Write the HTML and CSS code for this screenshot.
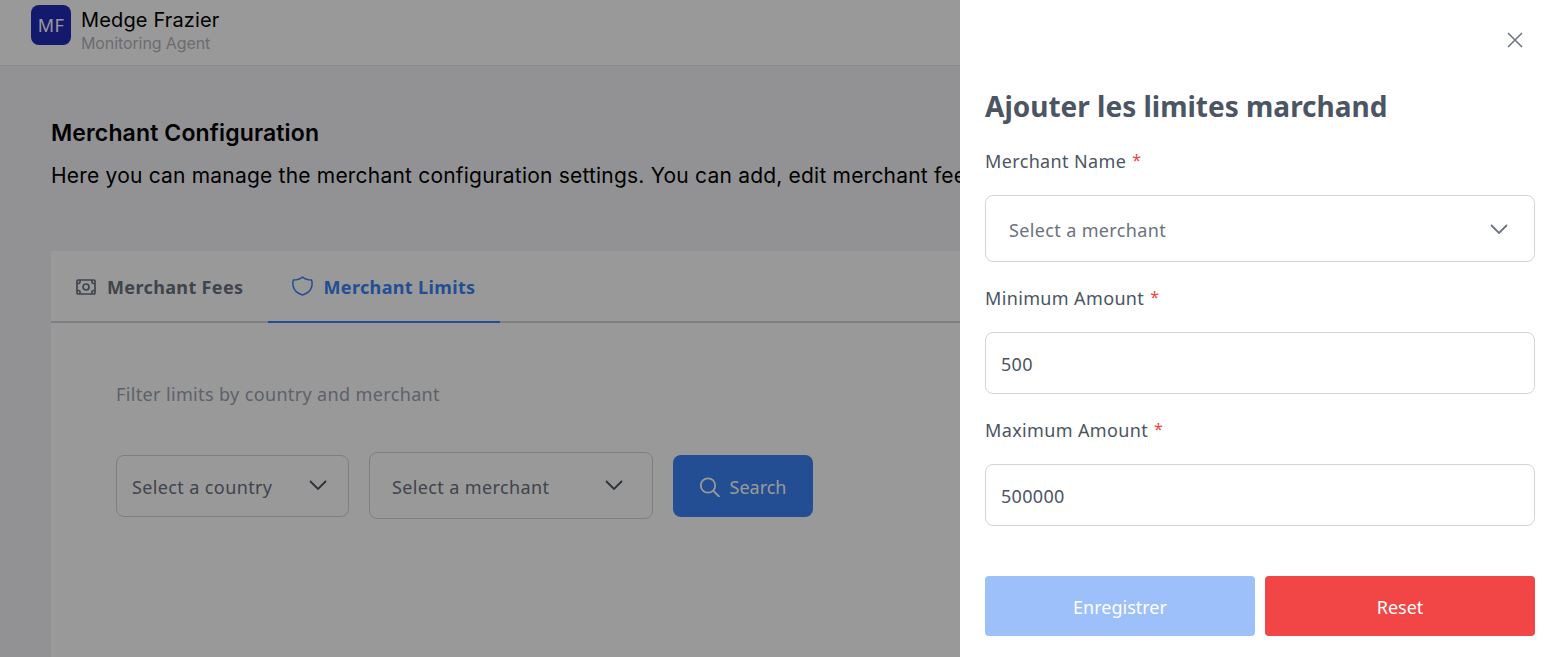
FILE: index.html
```html
<!DOCTYPE html>
<html lang="en">
<head>
<meta charset="utf-8">
<title>Merchant Configuration</title>
<link rel="stylesheet" href="styles.css">
</head>
<body>
<div class="page">
  <header class="topbar">
    <div class="avatar">MF</div>
    <div class="user">
      <div class="user-name">Medge Frazier</div>
      <div class="user-role">Monitoring Agent</div>
    </div>
  </header>
  <main class="main">
    <h1 class="page-title">Merchant Configuration</h1>
    <p class="page-desc">Here you can manage the merchant configuration settings. You can add, edit merchant fees</p>
    <section class="card">
      <nav class="tabs">
        <div class="tab">
          <svg class="icon-fees" viewBox="0 0 20 16" fill="none" stroke="currentColor" stroke-width="1.7"><rect x="1" y="1" width="18" height="14" rx="1"/><circle cx="10" cy="8" r="3"/><path d="M1 4.500h1.500a1.500 1.500 0 0 0 1.500-1.500V1M19 4.500h-1.500A1.500 1.500 0 0 1 16 3V1M1 11.500h1.500A1.500 1.500 0 0 1 4 13v2M19 11.500h-1.500A1.500 1.500 0 0 0 16 13v2"/></svg>
          <span>Merchant Fees</span>
        </div>
        <div class="tab tab-active">
          <svg class="icon-shield" viewBox="0 0 21 20" fill="none" stroke="currentColor" stroke-width="1.500" stroke-linejoin="round"><path d="M10.500 1C13 3.200 16 4 19.600 4c.6 2 .6 4 .3 6C19 14.500 15.500 17.500 10.500 19 5.500 17.500 2 14.500 1.100 10 .8 8 .8 6 1.400 4 5 4 8 3.200 10.500 1z"/></svg>
          <span>Merchant Limits</span>
        </div>
      </nav>
      <div class="card-body">
        <p class="filter-hint">Filter limits by country and merchant</p>
        <div class="filters">
          <div class="filter filter-country">
            <span>Select a country</span>
            <svg class="chevron" viewBox="0 0 20 20" fill="none" stroke="currentColor" stroke-width="1.800"><path d="M2 6l8 8 8-8"/></svg>
          </div>
          <div class="filter filter-merchant">
            <span>Select a merchant</span>
            <svg class="chevron" viewBox="0 0 20 20" fill="none" stroke="currentColor" stroke-width="1.800"><path d="M2 6l8 8 8-8"/></svg>
          </div>
          <button class="search-btn" type="button">
            <svg class="search-icon" viewBox="0 0 20 20" fill="none" stroke="currentColor" stroke-width="1.800" stroke-linecap="round"><circle cx="8" cy="8.500" r="7.200"/><path d="M13.500 14l5.500 5.500"/></svg>
            <span>Search</span>
          </button>
        </div>
      </div>
    </section>
  </main>
</div>
<div class="overlay"></div>
<aside class="drawer">
  <div class="drawer-top">
    <svg class="close-icon" viewBox="0 0 16 16" fill="none" stroke="currentColor" stroke-width="1.500"><path d="M1 1l14 14M15 1L1 15"/></svg>
  </div>
  <h2 class="drawer-title">Ajouter les limites marchand</h2>
  <form class="form">
    <div class="label">Merchant Name <span class="req">*</span></div>
    <div class="select-box">
      <span>Select a merchant</span>
      <svg class="chevron chevron-lg" viewBox="0 0 20 20" fill="none" stroke="currentColor" stroke-width="1.800"><path d="M2 6l8 8 8-8"/></svg>
    </div>
    <div class="label">Minimum Amount <span class="req">*</span></div>
    <div class="input-box">500</div>
    <div class="label">Maximum Amount <span class="req">*</span></div>
    <div class="input-box">500000</div>
    <div class="actions">
      <button class="btn btn-save" type="button">Enregistrer</button>
      <button class="btn btn-reset" type="button">Reset</button>
    </div>
  </form>
</aside>
</body>
</html>
```
FILE: styles.css
```css
* { box-sizing: border-box; }
html, body { margin: 0; height: 100%; overflow: hidden; }
body { font-family: "Noto Sans", sans-serif; background: #f3f4f7; color: #111; }
.page { height: 657px; overflow: hidden; }
.topbar { height: 66px; padding: 5px 31px 0; display: flex; gap: 10px; background: #fff; border-bottom: 1px solid #e7e7ea; align-items: flex-start; }
.avatar { width: 40px; height: 40px; border-radius: 8px; background: #212cb6; color: #fff; display: flex; align-items: center; justify-content: center; font-size: 18px; letter-spacing: .5px; }
.user { padding-top: 1px; font-family: Inter, sans-serif; }
.user-name { font-size: 20px; line-height: 28px; color: #000; letter-spacing: .15px; }
.user-role { font-size: 16px; line-height: 21px; color: #b4b4bc; margin-top: -1px; letter-spacing: -.1px; }
.main { padding: 52px 51px 0; }
.page-title { margin: 0; font: 600 23px/30px Inter, sans-serif; color: #000; letter-spacing: .14px; }
.page-desc { margin: 14px 0 0; font: 400 21px/27px Inter, sans-serif; color: #000; white-space: nowrap; letter-spacing: .2px; }
.card { margin-top: 62px; background: #fff; height: 420px; }
.tabs { display: flex; height: 72px; border-bottom: 2px solid #d1d5db; }
.tab { display: flex; align-items: center; gap: 10px; padding: 0 25px 0 24px; height: 72px; font-size: 18px; font-weight: 700; color: #6b7280; letter-spacing: .36px; }
.icon-fees { width: 20px; height: 16px; margin: 0 1px 0 1px; }
.icon-shield { width: 21px; height: 20px; margin-top: -2px; }
.tab-active { border-bottom: 2px solid #3b82f6; color: #3b82f6; padding-top: 2px; }
.card-body { padding: 58px 65px 0; }
.filter-hint { margin: 0; font-size: 18px; line-height: 26px; color: #9ca3af; letter-spacing: .36px; }
.filters { display: flex; align-items: center; gap: 20px; margin-top: 45px; }
.filter { display: flex; align-items: center; justify-content: space-between; border: 1px solid #d1d5db; border-radius: 8px; font-size: 18px; color: #6b7280; background: #fff; letter-spacing: .38px; padding-top: 2px; }
.filter-country { width: 233px; height: 62px; padding-left: 15px; padding-right: 20px; }
.filter-merchant { width: 284px; height: 67px; padding-left: 22px; padding-right: 28px; }
.chevron { width: 20px; height: 20px; color: #4b5563; margin-top: -3px; }
.search-btn { width: 140px; height: 62px; display: flex; align-items: center; justify-content: center; gap: 10px; background: #3b82f6; border: 0; border-radius: 8px; color: #fff; font: 400 18px "Noto Sans", sans-serif; padding: 2px 0 0; }
.search-icon { width: 20px; height: 20px; }
.overlay { position: fixed; inset: 0; background: rgba(0, 0, 0, .4); }
.drawer { position: fixed; top: 0; right: 0; bottom: 0; width: 598px; background: #fff; padding: 0 23px 0 25px; }
.drawer-top { height: 86px; display: flex; justify-content: flex-end; padding: 32px 0 0; }
.close-icon { width: 16px; height: 16px; color: #6b7280; margin-right: 12px; }
.drawer-title { margin: 0 0 12px; font-size: 28px; line-height: 40px; font-weight: 700; color: #4b5563; }
.form { display: flex; flex-direction: column; }
.label { font-size: 18px; line-height: 26px; color: #4b5563; margin-top: 9px; letter-spacing: .36px; }
.req { color: #ef4444; font-size: 16px; vertical-align: 2px; margin-left: 1px; }
.select-box { height: 67px; margin-top: 21px; display: flex; align-items: center; justify-content: space-between; padding: 2px 25px 0 23px; border: 1px solid #d1d5db; border-radius: 8px; font-size: 18px; color: #6b7280; margin-bottom: 13px; letter-spacing: .36px; }
.input-box { height: 62px; margin-top: 21px; display: flex; align-items: center; padding: 2px 15px 0; border: 1px solid #d1d5db; border-radius: 8px; font-size: 18px; color: #4b5563; margin-bottom: 13px; letter-spacing: .3px; }
.chevron-lg { color: #6b7280; margin-top: -2px; }
.actions { display: flex; gap: 10px; margin-top: 37px; }
.btn { flex: 1; height: 60px; border: 0; border-radius: 4px; color: #fff; font: 400 18px "Noto Sans", sans-serif; padding: 2px 0 0; }
.btn-save { background: #9dbffa; }
.btn-reset { background: #f24545; }
```
